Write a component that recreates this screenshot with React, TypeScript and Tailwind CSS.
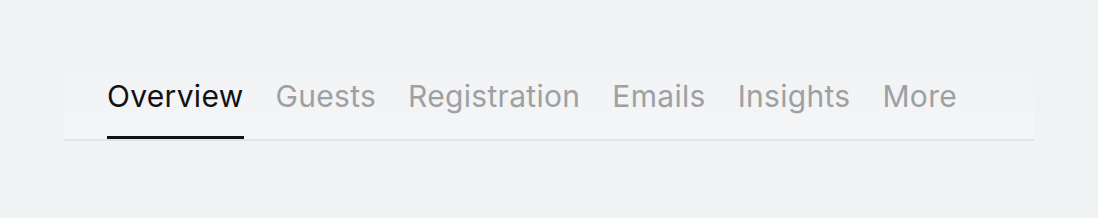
import React from "react";

const tabs = ["Overview", "Guests", "Registration", "Emails", "Insights", "More"];

export default function App() {
  return (
    <div className="w-[1098px] h-[218px] bg-[#f0f3f4] pt-[64px] pl-[64px]" style={{ fontFamily: 'Inter, "Noto Sans", sans-serif' }}>
      <div className="w-[970px] bg-gradient-to-b from-[#f0f3f4] via-[#f3f4f6] to-[#f4f5f7] border-b-2 border-[#e2e3e6] flex gap-[32px] pl-[43px]">
        {tabs.map((t, i) => (
          <div key={t} className="flex flex-col pt-[17px]">
            <span className={`text-[30px] leading-[30px] tracking-[0.3px] whitespace-nowrap ${i === 0 ? "text-[#111214]" : "text-[#9ea0a2]"}`}>
              {t}
            </span>
            <div className={`mt-[25px] h-[3px] ${i === 0 ? "bg-[#111214]" : "bg-transparent"}`} />
          </div>
        ))}
      </div>
    </div>
  );
}
